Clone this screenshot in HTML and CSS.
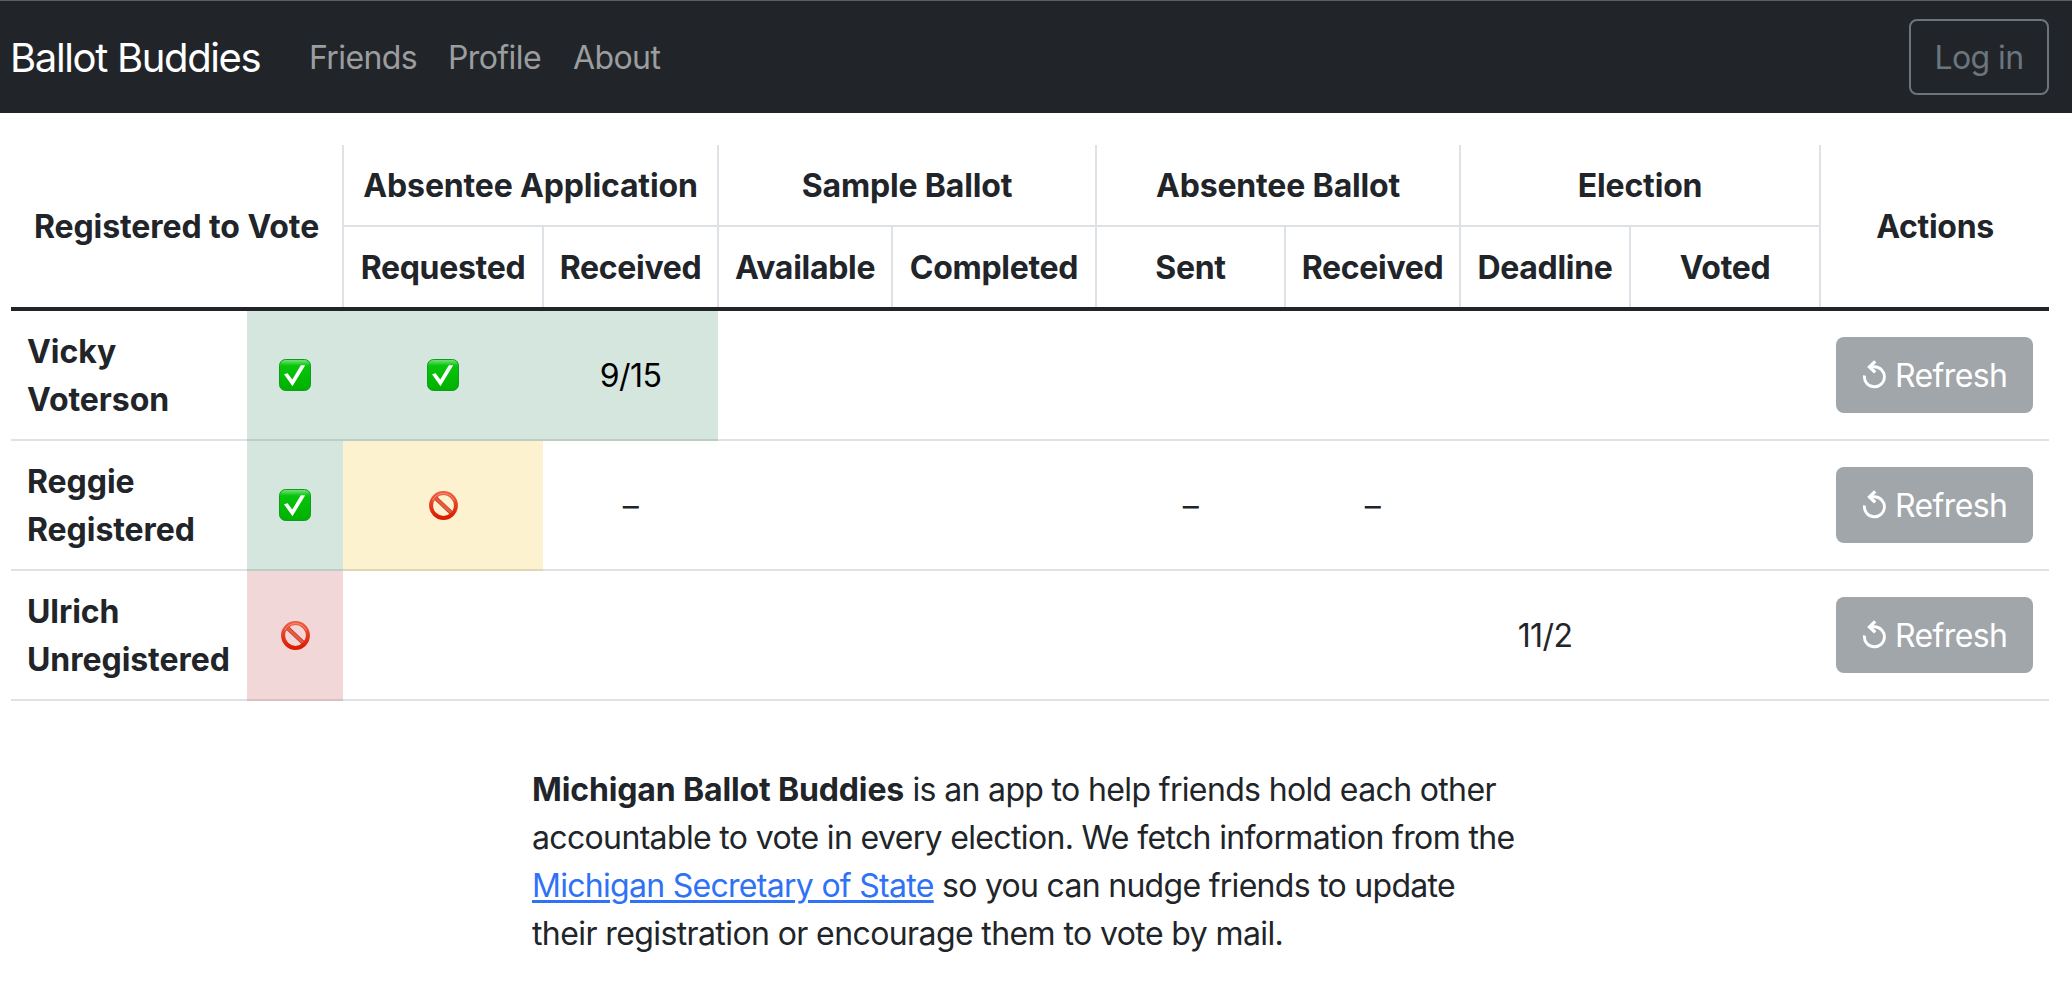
FILE: index.html
```html
<!DOCTYPE html>
<html lang="en">
<head>
<meta charset="utf-8">
<title>Ballot Buddies</title>
<link rel="stylesheet" href="styles.css">
</head>
<body>
<svg class="sprite" width="0" height="0" aria-hidden="true">
  <defs>
    <linearGradient id="green" x1="0" y1="0" x2="0" y2="1">
      <stop offset="0" stop-color="#7be47f"/><stop offset=".2" stop-color="#08c50c"/><stop offset="1" stop-color="#00b000"/>
    </linearGradient>
    <linearGradient id="red" x1="0" y1="0" x2="0" y2="1">
      <stop offset="0" stop-color="#ee5b40"/><stop offset="1" stop-color="#dc1c00"/>
    </linearGradient>
    <symbol id="check" viewBox="0 0 32 32">
      <rect x=".5" y=".5" width="31" height="31" rx="6" fill="url(#green)" stroke="#129a20"/>
      <path d="M5 15.3 8.6 14.3 13.3 20.6 21.8 6.2 26.2 6.2 13.5 27.2Z" fill="#fff"/>
    </symbol>
    <symbol id="prohibited" viewBox="0 0 32 32">
      <path d="M7.5 8 25.5 25" stroke="#b8351c" stroke-width="4.2"/>
      <path d="M7.5 8 25.5 25" stroke="#e95a3f" stroke-width="3"/>
      <circle cx="16.5" cy="16.5" r="12.4" fill="none" stroke="url(#red)" stroke-width="4"/>
      <path d="M5.5 11.5A12.2 12.2 0 0 1 27.5 11.5" fill="none" stroke="#f6907a" stroke-width="1"/>
    </symbol>
    <symbol id="refresh" viewBox="0 0 24 30">
      <path d="M2.5 15.5A10 10 0 1 0 12.5 6.8H9" fill="none" stroke="#fff" stroke-width="2.9"/>
      <path d="M13.2 1.4 7.6 6.9 13.2 12.4" fill="none" stroke="#fff" stroke-width="3.4"/>
    </symbol>
  </defs>
</svg>
<nav class="navbar">
  <a class="brand">Ballot Buddies</a>
  <a class="nav-link friends">Friends</a>
  <a class="nav-link profile">Profile</a>
  <a class="nav-link about">About</a>
  <button class="login">Log in</button>
</nav>
<main>
  <table class="status">
    <colgroup>
      <col class="c-name"><col class="c-reg"><col class="c-req"><col class="c-rec"><col class="c-avail"><col class="c-comp"><col class="c-sent"><col class="c-brec"><col class="c-dead"><col class="c-voted"><col class="c-act">
    </colgroup>
    <thead>
      <tr>
        <th colspan="2" rowspan="2" class="line-right registered">Registered to Vote</th>
        <th colspan="2" class="group">Absentee Application</th>
        <th colspan="2" class="group">Sample Ballot</th>
        <th colspan="2" class="group">Absentee Ballot</th>
        <th colspan="2" class="group">Election</th>
        <th rowspan="2">Actions</th>
      </tr>
      <tr>
        <th class="line-right">Requested</th><th class="line-right">Received</th>
        <th class="line-right">Available</th><th class="line-right">Completed</th>
        <th class="line-right">Sent</th><th class="line-right">Received</th>
        <th class="line-right">Deadline</th><th class="line-right">Voted</th>
      </tr>
    </thead>
    <tbody>
      <tr>
        <th class="name">Vicky Voterson</th>
        <td class="success"><svg class="mark"><use href="#check"/></svg></td>
        <td class="success"><svg class="mark"><use href="#check"/></svg></td>
        <td class="success">9/15</td>
        <td></td><td></td><td></td><td></td><td></td><td></td>
        <td><button class="refresh"><svg class="arrow"><use href="#refresh"/></svg>Refresh</button></td>
      </tr>
      <tr>
        <th class="name">Reggie Registered</th>
        <td class="success"><svg class="mark"><use href="#check"/></svg></td>
        <td class="warning"><svg class="mark"><use href="#prohibited"/></svg></td>
        <td>–</td>
        <td></td><td></td><td>–</td><td>–</td><td></td><td></td>
        <td><button class="refresh"><svg class="arrow"><use href="#refresh"/></svg>Refresh</button></td>
      </tr>
      <tr>
        <th class="name">Ulrich Unregistered</th>
        <td class="danger"><svg class="mark"><use href="#prohibited"/></svg></td>
        <td></td><td></td><td></td><td></td><td></td><td></td>
        <td>11/2</td><td></td>
        <td><button class="refresh"><svg class="arrow"><use href="#refresh"/></svg>Refresh</button></td>
      </tr>
    </tbody>
  </table>
  <p class="about-text"><strong>Michigan Ballot Buddies</strong> is an app to help friends hold each other<br>
  accountable to vote in every election. We fetch information from the<br>
  <span class="tight"><a>Michigan Secretary of State</a> so you can nudge friends to update</span><br>
  <span class="wide">their registration or encourage them to vote by mail.</span></p>
</main>
</body>
</html>
```
FILE: styles.css
```css
* { box-sizing: border-box; }
body {
  margin: 0;
  background: #fff;
  color: #212529;
  font: 400 32px/48px Inter, "Liberation Sans", sans-serif;
  letter-spacing: -0.6px;
}
.sprite { position: absolute; }
.navbar {
  display: flex;
  align-items: center;
  height: 113px;
  padding: 0 23px 0 10px;
  border-top: 1px solid #5b6064;
  background: #212529;
  white-space: nowrap;
}
.brand { width: 299px; padding-top: 2px; color: #fff; font-size: 40px; letter-spacing: -1.35px; }
.nav-link { padding-top: 2px; color: #9b9d9f; }
.friends { width: 139px; }
.profile { width: 125px; }
.login {
  width: 140px;
  height: 76px;
  margin-left: auto;
  padding: 2px 0 0;
  border: 2px solid #6c757d;
  border-radius: 8px;
  background: none;
  color: #6c757d;
  font: inherit;
  letter-spacing: inherit;
}
.status {
  width: 2038px;
  margin: 32px 0 0 11px;
  border-collapse: collapse;
  table-layout: fixed;
}
.c-name { width: 236px; }
.c-reg { width: 96px; }
.c-req { width: 200px; }
.c-rec { width: 175px; }
.c-avail { width: 174px; }
.c-comp { width: 204px; }
.c-sent { width: 189px; }
.c-brec { width: 175px; }
.c-dead { width: 170px; }
.c-voted { width: 190px; }
.c-act { width: 229px; }
th, td { padding: 17px 0 15px; text-align: center; vertical-align: middle; white-space: nowrap; }
th { font-weight: 700; letter-spacing: -0.3px; }
.line-right { border-right: 2px solid #dee2e6; }
.group { border-right: 2px solid #dee2e6; border-bottom: 2px solid #dee2e6; letter-spacing: -0.15px; }
.registered { letter-spacing: -0.08px; }
thead { border-bottom: 4px solid #212529; }
tbody th, tbody td { border-bottom: 2px solid #dee2e6; }
tbody .name { padding: 17px 0 15px 16px; letter-spacing: -0.05px; text-align: left; white-space: normal; }
tbody .success { background: #d5e6de; border-bottom-color: #bccdc6; color: #000; }
tbody .warning { background: #fdf2d0; border-bottom-color: #e0d7b8; color: #000; }
tbody .danger { background: #f2d7d9; border-bottom-color: #d9c0c3; color: #000; }
.mark { display: block; width: 32px; height: 32px; margin: -1px auto 1px; }
.refresh {
  display: flex;
  align-items: center;
  width: 197px;
  height: 76px;
  margin: -1px auto 1px;
  padding: 2px 0 0 26px;
  border: 0;
  border-radius: 8px;
  background: #a1a6aa;
  color: #fff;
  font: inherit;
  letter-spacing: inherit;
}
.arrow { width: 24px; height: 30px; margin: -2px 9px 0 0; }
.about-text { width: 1000px; margin: 65px 0 0 532px; letter-spacing: -0.65px; white-space: nowrap; }
.about-text strong { font-weight: 700; letter-spacing: -0.14px; }
.about-text .tight { letter-spacing: -0.71px; }
.about-text .wide { letter-spacing: -0.6px; }
.about-text a { color: #2f72f6; text-decoration: underline; text-decoration-thickness: 3px; text-underline-offset: 3px; }
```
